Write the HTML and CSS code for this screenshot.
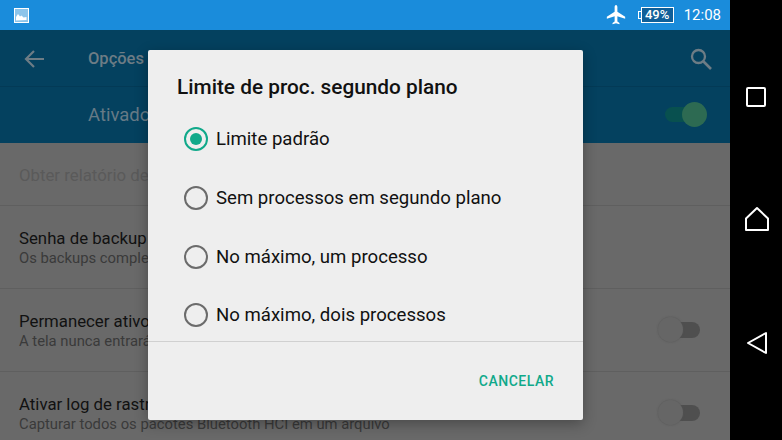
FILE: index.html
```html
<!DOCTYPE html>
<html lang="pt">
<head>
<meta charset="utf-8">
<title>Opções do desenvolvedor</title>
<link rel="stylesheet" href="styles.css">
</head>
<body>
<div class="device">
  <div class="screen">
    <header class="status">
      <svg class="pic" viewBox="0 0 15 15"><rect x="0.5" y="0.5" width="14" height="14" fill="#8cc4ea" stroke="#fff"/><path d="M2 12.500V9l2-3 2 2.500 1.500-1 2 2 3-.5v3z" fill="#fff"/></svg>
      <span class="status-right">
        <svg class="plane" viewBox="0 0 24 24"><path d="M22 16v-2.200l-8.500-5.300V3.200C13.500 2 12.700 1 12 1s-1.500 1-1.500 2.200v5.300L2 13.800V16l8.500-2.600v5.700l-2.300 1.700V22l3.800-1 3.800 1v-1.200l-2.300-1.700v-5.700z" fill="#fff"/></svg>
        <span class="battery"><span class="nub"></span><span class="level">49%</span></span>
        <span class="clock">12:08</span>
      </span>
    </header>
    <div class="toolbar">
      <svg class="back" viewBox="0 0 24 24"><path d="M22 12H4M12 4l-8 8 8 8" fill="none" stroke="#6d7c85" stroke-width="2.200"/></svg>
      <span class="tool-title">Opções do desenvolvedor</span>
      <svg class="search" viewBox="0 0 24 24"><circle cx="9.500" cy="9.500" r="6.500" fill="none" stroke="#6d7c85" stroke-width="2.300"/><path d="M14.500 14.500l7.500 7.500" stroke="#6d7c85" stroke-width="2.600"/></svg>
    </div>
    <div class="master">
      <span class="master-label">Ativado</span>
      <span class="switch on"><span class="track"></span><span class="thumb"></span></span>
    </div>
    <main class="list">
      <div class="row first"><div class="row-text"><div class="dim">Obter relatório de bugs</div></div></div>
      <div class="row"><div class="row-text"><div class="title">Senha de backup</div><div class="sub">Os backups completos</div></div></div>
      <div class="row"><div class="row-text"><div class="title">Permanecer ativo</div><div class="sub">A tela nunca entrará em</div></div><span class="switch off"><span class="track"></span><span class="thumb"></span></span></div>
      <div class="row last"><div class="row-text"><div class="title">Ativar log de rastreamento</div><div class="sub">Capturar todos os pacotes Bluetooth HCI em um arquivo</div></div><span class="switch off"><span class="track"></span><span class="thumb"></span></span></div>
    </main>
    <section class="dialog">
      <h1 class="dialog-title">Limite de proc. segundo plano</h1>
      <div class="options">
        <div class="option"><span class="radio checked"></span>Limite padrão</div>
        <div class="option"><span class="radio"></span>Sem processos em segundo plano</div>
        <div class="option"><span class="radio"></span>No máximo, um processo</div>
        <div class="option"><span class="radio"></span>No máximo, dois processos</div>
      </div>
      <div class="actions"><span class="cancel">CANCELAR</span></div>
    </section>
  </div>
  <nav class="nav">
    <svg class="nav-icon" viewBox="0 0 22 22"><rect x="2" y="2" width="18" height="18" rx="1" fill="none" stroke="#fff" stroke-width="2"/></svg>
    <svg class="nav-icon" viewBox="0 0 26 26"><path d="M2 24V12.500L13 2l11 10.500V24z" fill="none" stroke="#fff" stroke-width="2" stroke-linejoin="round"/></svg>
    <svg class="nav-icon" viewBox="0 0 22 24"><path d="M2 12L20 2v20z" fill="none" stroke="#fff" stroke-width="2" stroke-linejoin="round"/></svg>
  </nav>
</div>
</body>
</html>
```
FILE: styles.css
```css
* { box-sizing: border-box; }
html, body { margin: 0; height: 100%; }
body { background: #000; font-family: Roboto, "Liberation Sans", sans-serif; overflow: hidden; }
.device { display: flex; width: 782px; height: 440px; }
.screen { position: relative; width: 730px; height: 440px; overflow: hidden; background: #696969; display: flex; flex-direction: column; }
.status { height: 30px; flex: none; background: #1a8cdb; display: flex; align-items: center; justify-content: space-between; padding: 0 9px 0 14px; color: #fff; }
.pic { width: 15px; height: 15px; }
.status-right { display: flex; align-items: center; }
.plane { width: 22px; height: 22px; margin-right: 14px; }
.battery { position: relative; display: block; width: 33px; height: 16px; border: 1px solid #fff; margin-right: 10px; font-size: 13px; font-weight: 500; line-height: 14px; text-align: center; background: #0f5f99; }
.nub { position: absolute; left: -4px; top: 3px; width: 3px; height: 8px; border: 1px solid #fff; border-right: 0; }
.level { display: block; }
.clock { font-size: 15px; }
.toolbar { height: 57px; flex: none; background: #04415f; display: flex; align-items: center; padding: 0 17px 0 22px; box-shadow: inset 0 -1px 0 #033a56; }
.back { width: 24px; height: 24px; }
.tool-title { margin-left: 42px; font-size: 16.500px; font-weight: 500; color: #6d7c85; white-space: nowrap; flex: 1; }
.search { width: 24px; height: 24px; }
.master { height: 56px; flex: none; background: #04415f; display: flex; align-items: center; justify-content: space-between; padding: 0 23px 0 88px; }
.master-label { font-size: 18.500px; color: #667a86; }
.switch { position: relative; display: block; width: 42px; height: 26px; flex: none; }
.track { position: absolute; left: 0; right: 2px; top: 5px; height: 15px; border-radius: 8px; }
.thumb { position: absolute; top: 0; width: 25px; height: 25px; border-radius: 50%; }
.on .track { background: #08504f; }
.on .thumb { right: 0; background: #2d6a52; }
.off .track { background: #4f4f4f; left: 12px; right: 0; top: 5px; height: 16px; }
.off .thumb { left: 0; background: #666; box-shadow: 0 0 2px #555; }
.list { flex: 1; display: flex; flex-direction: column; }
.row { height: 83px; flex: none; display: flex; align-items: center; justify-content: space-between; padding: 0 30px 0 19px; border-top: 1px solid #5f5f5f; }
.row.first { height: 62px; border-top: 0; }
.row-text { white-space: nowrap; padding-top: 2px; }
.dim { font-size: 16.800px; color: #5a5a5a; }
.title { font-size: 16.800px; line-height: 20px; color: #111; }
.sub { font-size: 14.800px; line-height: 21px; color: #3a3a3a; }
.dialog { position: absolute; left: 148px; top: 50px; width: 435px; height: 370px; background: #eee; border-radius: 2px; box-shadow: 0 4px 14px rgba(0,0,0,.3); display: flex; flex-direction: column; }
.dialog-title { margin: 0; padding: 25px 29px 0; font-size: 20.800px; line-height: 25px; font-weight: 500; color: #111; }
.options { margin-top: 10px; flex: none; height: 231px; padding-left: 36px; display: flex; flex-direction: column; }
.option { height: 58.700px; flex: none; display: flex; align-items: center; gap: 8px; font-size: 18.600px; color: #111; white-space: nowrap; }
.radio { display: block; width: 24px; height: 24px; border-radius: 50%; border: 2.500px solid #6b6b6b; flex: none; }
.radio.checked { border-color: #10a98a; position: relative; }
.radio.checked::after { content: ""; position: absolute; left: 3.500px; top: 3.500px; width: 12px; height: 12px; border-radius: 50%; background: #10a98a; }
.actions { flex: 1; border-top: 1px solid #d0d0d0; display: flex; align-items: center; justify-content: flex-end; padding: 0 29px 0 0; }
.cancel { font-size: 14px; font-weight: 500; letter-spacing: .5px; color: #10a98a; }
.nav { width: 52px; height: 440px; flex: none; background: #000; display: flex; flex-direction: column; align-items: center; justify-content: center; }
.nav-icon { display: block; flex: none; }
.nav-icon:nth-child(1) { width: 22px; height: 22px; margin: 0 1px 0 0; }
.nav-icon:nth-child(2) { width: 26px; height: 26px; margin: 98px 0 0 1px; }
.nav-icon:nth-child(3) { width: 22px; height: 24px; margin: 99px 0 0 1px; }
```
